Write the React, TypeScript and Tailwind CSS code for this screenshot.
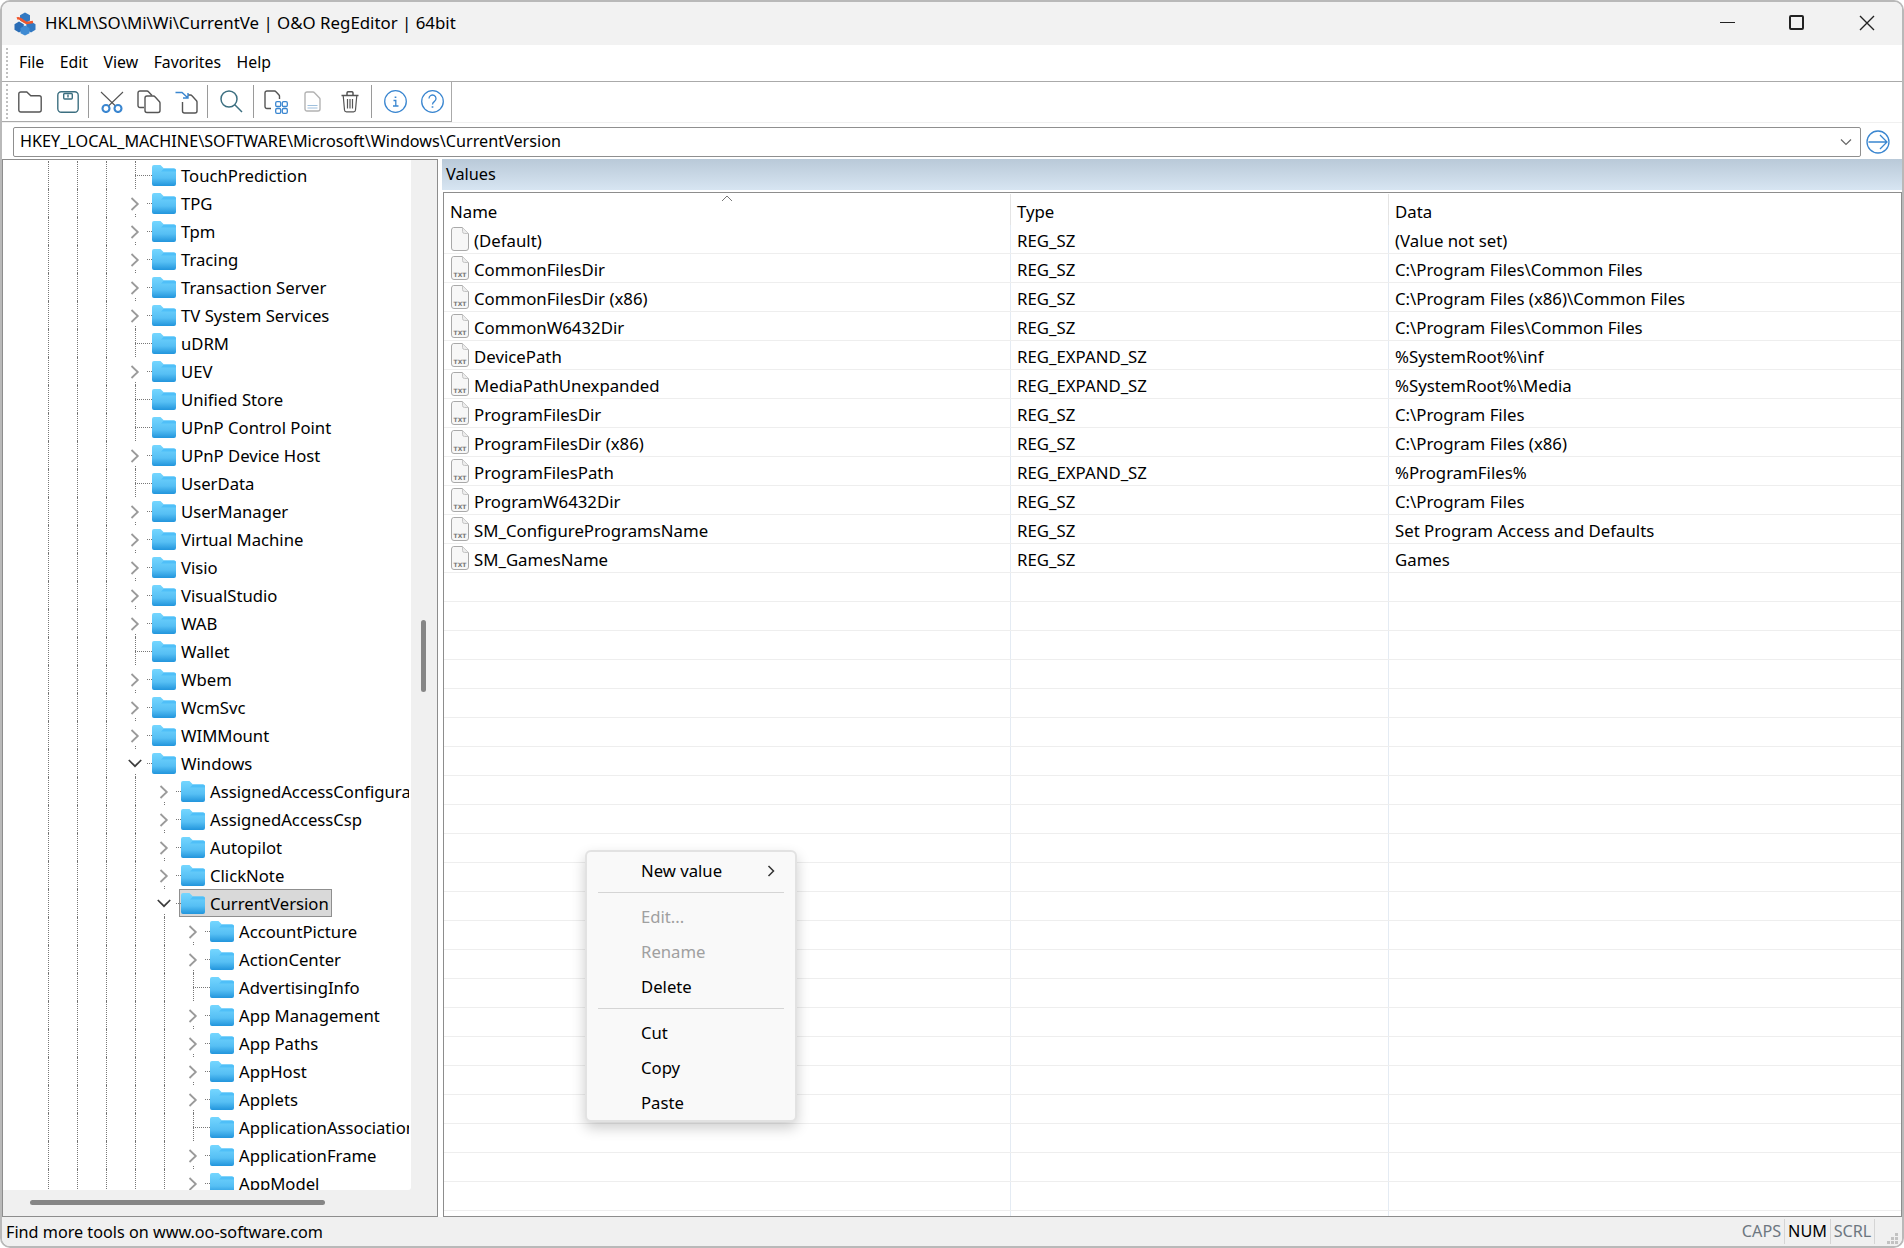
import React from "react";

type Row = { label: string; level: number; kind: "closed" | "open" | "leaf"; selected?: boolean };

const L = (label: string, level: number, kind: Row["kind"] = "closed", selected = false): Row => ({ label, level, kind, selected });

const treeRows: Row[] = [
  L("TouchPrediction", 1, "leaf"),
  L("TPG", 1),
  L("Tpm", 1),
  L("Tracing", 1),
  L("Transaction Server", 1),
  L("TV System Services", 1),
  L("uDRM", 1, "leaf"),
  L("UEV", 1),
  L("Unified Store", 1, "leaf"),
  L("UPnP Control Point", 1, "leaf"),
  L("UPnP Device Host", 1),
  L("UserData", 1, "leaf"),
  L("UserManager", 1),
  L("Virtual Machine", 1),
  L("Visio", 1),
  L("VisualStudio", 1),
  L("WAB", 1),
  L("Wallet", 1, "leaf"),
  L("Wbem", 1),
  L("WcmSvc", 1),
  L("WIMMount", 1),
  L("Windows", 1, "open"),
  L("AssignedAccessConfiguration", 2),
  L("AssignedAccessCsp", 2),
  L("Autopilot", 2),
  L("ClickNote", 2),
  L("CurrentVersion", 2, "open", true),
  L("AccountPicture", 3),
  L("ActionCenter", 3),
  L("AdvertisingInfo", 3, "leaf"),
  L("App Management", 3),
  L("App Paths", 3),
  L("AppHost", 3),
  L("Applets", 3),
  L("ApplicationAssociationToasts", 3, "leaf"),
  L("ApplicationFrame", 3),
  L("AppModel", 3),
];

const values = [
  ["(Default)", "REG_SZ", "(Value not set)"],
  ["CommonFilesDir", "REG_SZ", "C:\\Program Files\\Common Files"],
  ["CommonFilesDir (x86)", "REG_SZ", "C:\\Program Files (x86)\\Common Files"],
  ["CommonW6432Dir", "REG_SZ", "C:\\Program Files\\Common Files"],
  ["DevicePath", "REG_EXPAND_SZ", "%SystemRoot%\\inf"],
  ["MediaPathUnexpanded", "REG_EXPAND_SZ", "%SystemRoot%\\Media"],
  ["ProgramFilesDir", "REG_SZ", "C:\\Program Files"],
  ["ProgramFilesDir (x86)", "REG_SZ", "C:\\Program Files (x86)"],
  ["ProgramFilesPath", "REG_EXPAND_SZ", "%ProgramFiles%"],
  ["ProgramW6432Dir", "REG_SZ", "C:\\Program Files"],
  ["SM_ConfigureProgramsName", "REG_SZ", "Set Program Access and Defaults"],
  ["SM_GamesName", "REG_SZ", "Games"],
];

function Folder() {
  return (
    <svg width="24" height="21" viewBox="0 0 24 21" className="shrink-0">
      <defs>
        <linearGradient id="fld" x1="0" y1="0" x2="0" y2="1">
          <stop offset="0" stopColor="#74d6ff" />
          <stop offset="0.62" stopColor="#56bff4" />
          <stop offset="1" stopColor="#2295dc" />
        </linearGradient>
      </defs>
      <path d="M0 2a2 2 0 0 1 2-2h6.500l3.500 3.500h10a2 2 0 0 1 2 2V19a2 2 0 0 1-2 2H2a2 2 0 0 1-2-2z" fill="url(#fld)" />
      <path d="M0 6.500 L9 6.500 L12 3.500 L22 3.500 A2 2 0 0 1 24 5.500 V6.500 H0z" fill="#4fbff8" />
    </svg>
  );
}

function TxtIcon({ blank }: { blank?: boolean }) {
  return (
    <svg width="18" height="24" viewBox="0 0 18 24" className="shrink-0">
      <path d="M2.500.5h9l6 6v14.500a2.500 2.500 0 0 1-2.500 2.500H3a2.500 2.500 0 0 1-2.500-2.500V3A2.500 2.500 0 0 1 2.500.5z" fill="#f7f7f7" stroke="#a9a9a9" />
      <path d="M11.500.5v4a2 2 0 0 0 2 2h4" fill="#ececec" stroke="#c4c4c4" />
      {!blank && <text x="9" y="20.500" textAnchor="middle" fontSize="6" fontWeight="700" fontFamily="'DejaVu Sans', sans-serif" fill="#777">TXT</text>}
    </svg>
  );
}

function TreeRow({ row }: { row: Row }) {
  const guides = Array.from({ length: row.level + 2 });
  return (
    <div className="flex h-[28px] items-center pl-[45px] whitespace-nowrap">
      {guides.map((_, i) => (
        <div key={i} className="h-full w-[29px] shrink-0 border-l border-dotted border-[#777]" />
      ))}
      <div className="relative h-full w-[17px] shrink-0">
        {row.kind === "leaf" ? (
          <>
            <div className="absolute left-0 top-0 h-full border-l border-dotted border-[#777]" />
            <div className="absolute left-0 top-[14px] w-[17px] border-t border-dotted border-[#777]" />
          </>
        ) : (
          <>
            <div className="absolute left-0 top-[25px] h-[3px] border-l border-dotted border-[#777]" />
            <div className="absolute left-[12px] top-[14px] w-[5px] border-t border-dotted border-[#777]" />
            {row.kind === "closed" ? (
              <svg width="14" height="14" viewBox="0 0 14 14" className="absolute left-[-6px] top-[8px]" fill="none" stroke="#9a9a9a" strokeWidth="1.800">
                <path d="M2.500 1 8.800 7 2.500 13" />
              </svg>
            ) : (
              <svg width="14" height="14" viewBox="0 0 14 14" className="absolute left-[-7px] top-[7px]" fill="none" stroke="#3c3c3c" strokeWidth="1.700">
                <path d="M.8 4 7 10.200 13.200 4" />
              </svg>
            )}
          </>
        )}
      </div>
      {row.selected ? (
        <div className="-ml-[2px] flex h-[28px] items-center border border-[#8f8f8f] bg-[#d9d9d9] pl-px pr-[2px]">
          <Folder />
          <span className="ml-[5px] pt-px">{row.label}</span>
        </div>
      ) : (
        <>
          <Folder />
          <span className="ml-[5px] pt-px">{row.label}</span>
        </>
      )}
    </div>
  );
}

function Sep({ ml }: { ml: string }) {
  return <div className={`h-[33px] w-px shrink-0 bg-[#9a9a9a] ${ml}`} />;
}

function Toolbar() {
  const g = "#555";
  const b = "#3a86d0";
  const t = "#3c6f80";
  return (
    <div className="flex h-full w-[450px] items-center border-r border-b border-[#aaa] pl-[4px]">
      <div className="h-[35px] w-[2px] border-l-2 border-dotted border-[#c0c0c0]" />
      <svg width="24" height="22" viewBox="0 0 24 22" fill="none" stroke={g} strokeWidth="1.400" className="ml-[10px]">
        <path d="M.8 3a2 2 0 0 1 2-2h6l4 3.800h8.400a2 2 0 0 1 2 2V19a2 2 0 0 1-2 2H2.800a2 2 0 0 1-2-2z" />
      </svg>
      <svg width="22" height="22" viewBox="0 0 22 22" fill="none" stroke={t} strokeWidth="1.400" className="ml-[15px]">
        <rect x=".8" y=".8" width="20.400" height="20.400" rx="3.500" />
        <rect x="6.700" y="2.500" width="8.600" height="5.500" rx="1" />
        <path d="M11 3.500v3" />
      </svg>
      <Sep ml="ml-[9px]" />
      <svg width="24" height="22" viewBox="0 0 24 22" fill="none" className="ml-[11px]">
        <path d="M1 1 15.500 15M23 1 8.500 15" stroke="#555" strokeWidth="1.100" />
        <circle cx="6" cy="17.500" r="3.500" stroke={b} strokeWidth="2.100" />
        <circle cx="18" cy="17.500" r="3.500" stroke={b} strokeWidth="2.100" />
      </svg>
      <svg width="24" height="24" viewBox="0 0 24 24" fill="none" stroke={g} strokeWidth="1.400" className="ml-[13px]">
        <path d="M7 17.500H3a2 2 0 0 1-2-2V3a2 2 0 0 1 2-2h7a2 2 0 0 1 1.500.7L15 5.500" />
        <path d="M8 8a2 2 0 0 1 2-2h6.500a2 2 0 0 1 1.500.7l4.500 5a2 2 0 0 1 .5 1.300v7.500a2 2 0 0 1-2 2H10a2 2 0 0 1-2-2z" />
      </svg>
      <svg width="23" height="24" viewBox="0 0 23 24" fill="none" stroke={g} strokeWidth="1.400" className="ml-[14px]">
        <path d="M13 5h2.500a2 2 0 0 1 1.500.7l4.500 5a2 2 0 0 1 .5 1.300v9a2 2 0 0 1-2 2H9.500a2 2 0 0 1-2-2v-9" />
        <path d="M.5 2.500h6.500l5.500 5M13 3v5H8" stroke={b} />
      </svg>
      <Sep ml="ml-[9px]" />
      <svg width="23" height="23" viewBox="0 0 23 23" fill="none" stroke={t} strokeWidth="1.500" className="ml-[12px]">
        <circle cx="9" cy="9" r="8" />
        <path d="M14.800 14.800 22 22" />
      </svg>
      <Sep ml="ml-[10px]" />
      <svg width="24" height="24" viewBox="0 0 24 24" fill="none" className="ml-[10px]">
        <path d="M7 18.500H3a2 2 0 0 1-2-2V3a2 2 0 0 1 2-2h7.500a2 2 0 0 1 1.500.7l3 3.300a2 2 0 0 1 .5 1.300V9" stroke={g} strokeWidth="1.400" />
        <g stroke={b} strokeWidth="1.300">
          <rect x="11.700" y="11.700" width="5" height="4.800" rx="1.300" />
          <rect x="18.300" y="11.700" width="5" height="4.800" rx="1.300" />
          <rect x="11.700" y="18.500" width="5" height="4.800" rx="1.300" />
          <rect x="18.300" y="18.500" width="5" height="4.800" rx="1.300" />
        </g>
      </svg>
      <svg width="17" height="21" viewBox="0 0 17 21" fill="none" stroke="#b3b3b3" strokeWidth="1.400" className="ml-[16px]">
        <path d="M1 3a2 2 0 0 1 2-2h6a2 2 0 0 1 1.500.7l5 5.300a2 2 0 0 1 .5 1.300V18a2 2 0 0 1-2 2H3a2 2 0 0 1-2-2z" />
        <path d="M3.500 14.500h10M3.500 17h10" stroke="#9fc0dd" strokeWidth="1.100" />
      </svg>
      <svg width="18" height="22" viewBox="0 0 18 22" fill="none" stroke={g} strokeWidth="1.200" className="ml-[20px]">
        <path d="M.5 4.500h17M6 4.500V2a1.300 1.300 0 0 1 1.300-1.300h3.400A1.300 1.300 0 0 1 12 2v2.500" strokeWidth="1.500" />
        <path d="M2.200 4.500 3.500 19a2 2 0 0 0 2 1.900h7a2 2 0 0 0 2-1.900L15.800 4.500" />
        <path d="M6.500 8v9.500M9 8v9.500M11.500 8v9.500" />
      </svg>
      <Sep ml="ml-[12px]" />
      <svg width="23" height="23" viewBox="0 0 23 23" fill="none" stroke={b} strokeWidth="1.300" className="ml-[12px]">
        <circle cx="11.500" cy="11.500" r="10.800" />
        <path d="M9.500 10.500h2.300v5.500M9 16h5.500" />
        <path d="M11.500 6.500v1.500" strokeWidth="1.700" />
      </svg>
      <svg width="23" height="23" viewBox="0 0 23 23" fill="none" stroke={b} strokeWidth="1.300" className="ml-[14px]">
        <circle cx="11.500" cy="11.500" r="10.800" />
        <path d="M8 8.500a3.500 3.500 0 1 1 5.500 2.900c-1.300.9-2 1.500-2 3" />
        <path d="M11.500 16.300v1.500" strokeWidth="1.700" />
      </svg>
    </div>
  );
}

function Logo() {
  return (
    <svg width="24" height="24" viewBox="0 0 24 24" className="shrink-0">
      <g fill="#3279c2">
        <path d="M11 0.500 16 3.200v5.300l-5 2.800-5-2.800V3.200z" />
        <path d="M5 9.500 9.800 12.300v5.400L5 20.500.5 17.700v-5.400z" fill="#2a6db6" />
        <path d="M17 9.500 21.500 12.300v5.400L17 20.500l-4.700-2.800v-5.400z" />
        <path d="M11 13.500 15.500 16v5.300L11 23.500l-4.500-2.200V16z" fill="#3f8bd3" />
      </g>
      <path d="M3 6.500c2.500-1 4 .5 5.500 2l4 2.500 6.500-1" stroke="#f0562c" strokeWidth="2.600" fill="none" />
    </svg>
  );
}

function MenuItem({ label, disabled, children }: { label: string; disabled?: boolean; children?: React.ReactNode }) {
  return (
    <div className={`flex h-[35px] items-center justify-between pl-[54px] pr-[20px] ${disabled ? "text-[#a0a0a0]" : "text-black"}`}>
      <span>{label}</span>
      {children}
    </div>
  );
}

export default function App() {
  return (
    <div
      className="flex h-[1248px] w-[1904px] flex-col overflow-hidden rounded-[10px] border-2 border-[#b9b9b9] bg-white text-[16px] text-black"
      style={{ fontFamily: "'Noto Sans', 'Open Sans', sans-serif" }}
    >
      {/* Title bar */}
      <div className="flex h-[43px] shrink-0 items-center bg-[#f2f2f2] pl-[12px]">
        <Logo />
        <span className="ml-[7px] pb-[2px] text-[16.85px]">HKLM\SO\Mi\Wi\CurrentVe | O&amp;O RegEditor | 64bit</span>
        <div className="ml-auto flex items-center pr-[27px] pb-[2px]">
          <div className="h-[1.500px] w-[15px] bg-[#222]" />
          <div className="ml-[54px] h-[15px] w-[15px] rounded-[2px] border-2 border-[#222]" />
          <svg width="16" height="16" viewBox="0 0 16 16" className="ml-[55px]" stroke="#222" strokeWidth="1.400">
            <path d="M1 1 15 15M15 1 1 15" />
          </svg>
        </div>
      </div>

      {/* Menu */}
      <div className="flex h-[37px] shrink-0 items-center border-b border-[#aaa] pl-[4px]">
        <div className="h-[30px] w-[2px] border-l-2 border-dotted border-[#c0c0c0]" />
        <div className="ml-[11px] flex gap-[15.5px] text-[15.8px]">
          <span>File</span><span>Edit</span><span>View</span><span>Favorites</span><span>Help</span>
        </div>
      </div>

      {/* Toolbar */}
      <div className="flex h-[41px] shrink-0 items-center border-b border-[#f0f0f0]">
        <Toolbar />
      </div>

      {/* Address */}
      <div className="flex h-[36px] shrink-0 items-center pl-[11px] pt-[2px]">
        <div className="flex h-[30px] w-[1848px] items-center justify-between rounded-[2px] border border-[#8f8f8f] pl-[6px] pr-[8px]">
          <span className="pb-[2px] text-[16.2px]">HKEY_LOCAL_MACHINE\SOFTWARE\Microsoft\Windows\CurrentVersion</span>
          <svg width="12" height="8" viewBox="0 0 12 8" fill="none" stroke="#666" strokeWidth="1.200"><path d="M1 1.500 6 6.500 11 1.500" /></svg>
        </div>
        <svg width="24" height="24" viewBox="0 0 24 24" fill="none" stroke="#3a86d0" strokeWidth="1.300" className="ml-[5px]">
          <circle cx="12" cy="12" r="11" />
          <path d="M2.500 12h18M14 5l7 7-7 7" />
        </svg>
      </div>

      {/* Panels */}
      <div className="flex min-h-0 flex-1">
        <div className="flex w-[436px] shrink-0 flex-col border border-[#8d8d8d] bg-[#f0f0f0]">
          <div className="flex min-h-0 flex-1">
            <div className="min-h-0 w-[408px] overflow-hidden rounded-br-[3px] border-r-2 border-white bg-white pt-px text-[16.7px]">
              {treeRows.map((r) => <TreeRow key={r.label} row={r} />)}
            </div>
            <div className="flex-1 pl-[10px] pt-[460px]">
              <div className="h-[72px] w-[5px] rounded-full bg-[#868686]" />
            </div>
          </div>
          <div className="h-[26px] shrink-0 pl-[27px] pt-[10px]">
            <div className="h-[5px] w-[295px] rounded-full bg-[#868686]" />
          </div>
        </div>

        <div className="ml-[4px] flex min-w-0 flex-1 flex-col">
          <div className="flex h-[31px] shrink-0 items-center bg-gradient-to-b from-[#b9c9d8] to-[#d7e5f2] pl-[4px] text-[16.3px]">Values</div>
          <div className="relative ml-px mt-[2px] min-h-0 flex-1 overflow-hidden border border-[#8d8d8d] text-[16.8px]">
            <div className="relative flex h-[32px] pt-px">
              <div className="flex w-[567px] shrink-0 items-center border-r border-[#e4e4e4] pl-[6px] pt-[4px]">Name</div>
              <div className="flex w-[378px] shrink-0 items-center border-r border-[#e4e4e4] pl-[6px] pt-[4px]">Type</div>
              <div className="flex items-center pl-[6px] pt-[4px]">Data</div>
              <svg width="12" height="7" viewBox="0 0 12 7" fill="none" stroke="#777" className="absolute left-[277px] top-[2px]"><path d="M1 6 6 1l5 5" /></svg>
            </div>
            {Array.from({ length: 35 }).map((_, i) => {
              const v = values[i];
              return (
                <div key={i} className="flex h-[29px] items-center border-b border-[#eeeeee]">
                  <div className="flex h-full w-[567px] shrink-0 items-center border-r border-[#e4ebf3] pl-[7px]">
                    {v && <TxtIcon blank={i === 0} />}
                    {v && <span className="ml-[5px] pt-[3px]">{v[0]}</span>}
                  </div>
                  <div className="flex h-full w-[378px] shrink-0 items-center border-r border-[#e4ebf3] pl-[6px]">
                    {v && <span className="pt-[3px]">{v[1]}</span>}
                  </div>
                  {v && <div className="pl-[6px] pt-[3px]">{v[2]}</div>}
                </div>
              );
            })}

            {/* Context menu */}
            <div className="absolute left-[141px] top-[657px] w-[212px] rounded-[6px] border-2 border-[#e2e2e2] bg-[#f9f9f9] pt-px text-[16.7px] shadow-[0_6px_14px_rgba(0,0,0,0.2)]">
              <MenuItem label="New value">
                <svg width="8" height="12" viewBox="0 0 8 12" fill="none" stroke="#333" strokeWidth="1.500"><path d="M1.500 1 6.500 6 1.500 11" /></svg>
              </MenuItem>
              <div className="mx-[11px] mb-[6px] mt-[4px] h-px bg-[#d5d5d5]" />
              <MenuItem label="Edit..." disabled />
              <MenuItem label="Rename" disabled />
              <MenuItem label="Delete" />
              <div className="mx-[11px] mb-[6px] mt-[4px] h-px bg-[#d5d5d5]" />
              <MenuItem label="Cut" />
              <MenuItem label="Copy" />
              <MenuItem label="Paste" />
            </div>
          </div>
        </div>
      </div>

      {/* Status bar */}
      <div className="flex h-[29px] shrink-0 items-center bg-[#f0f0f0] pl-[4px] text-[16.2px]">
        <span className="pt-[2px]">Find more tools on www.oo-software.com</span>
        <div className="ml-auto flex h-full items-center pb-[2px] pt-[2px]">
          <span className="h-full w-[46px] border-r border-[#d5d5d5] text-center text-[#6d7780]">CAPS</span>
          <span className="h-full w-[46px] border-r border-[#d5d5d5] text-center">NUM</span>
          <span className="h-full w-[44px] border-r border-[#d5d5d5] text-center text-[#6d7780]">SCRL</span>
          <svg width="27" height="25" viewBox="0 0 27 25" fill="#c2c2c2">
            <rect x="20" y="14" width="3" height="3" />
            <rect x="16" y="18" width="3" height="3" />
            <rect x="20" y="18" width="3" height="3" />
            <rect x="12" y="22" width="3" height="3" />
            <rect x="16" y="22" width="3" height="3" />
            <rect x="20" y="22" width="3" height="3" />
          </svg>
        </div>
      </div>
    </div>
  );
}
